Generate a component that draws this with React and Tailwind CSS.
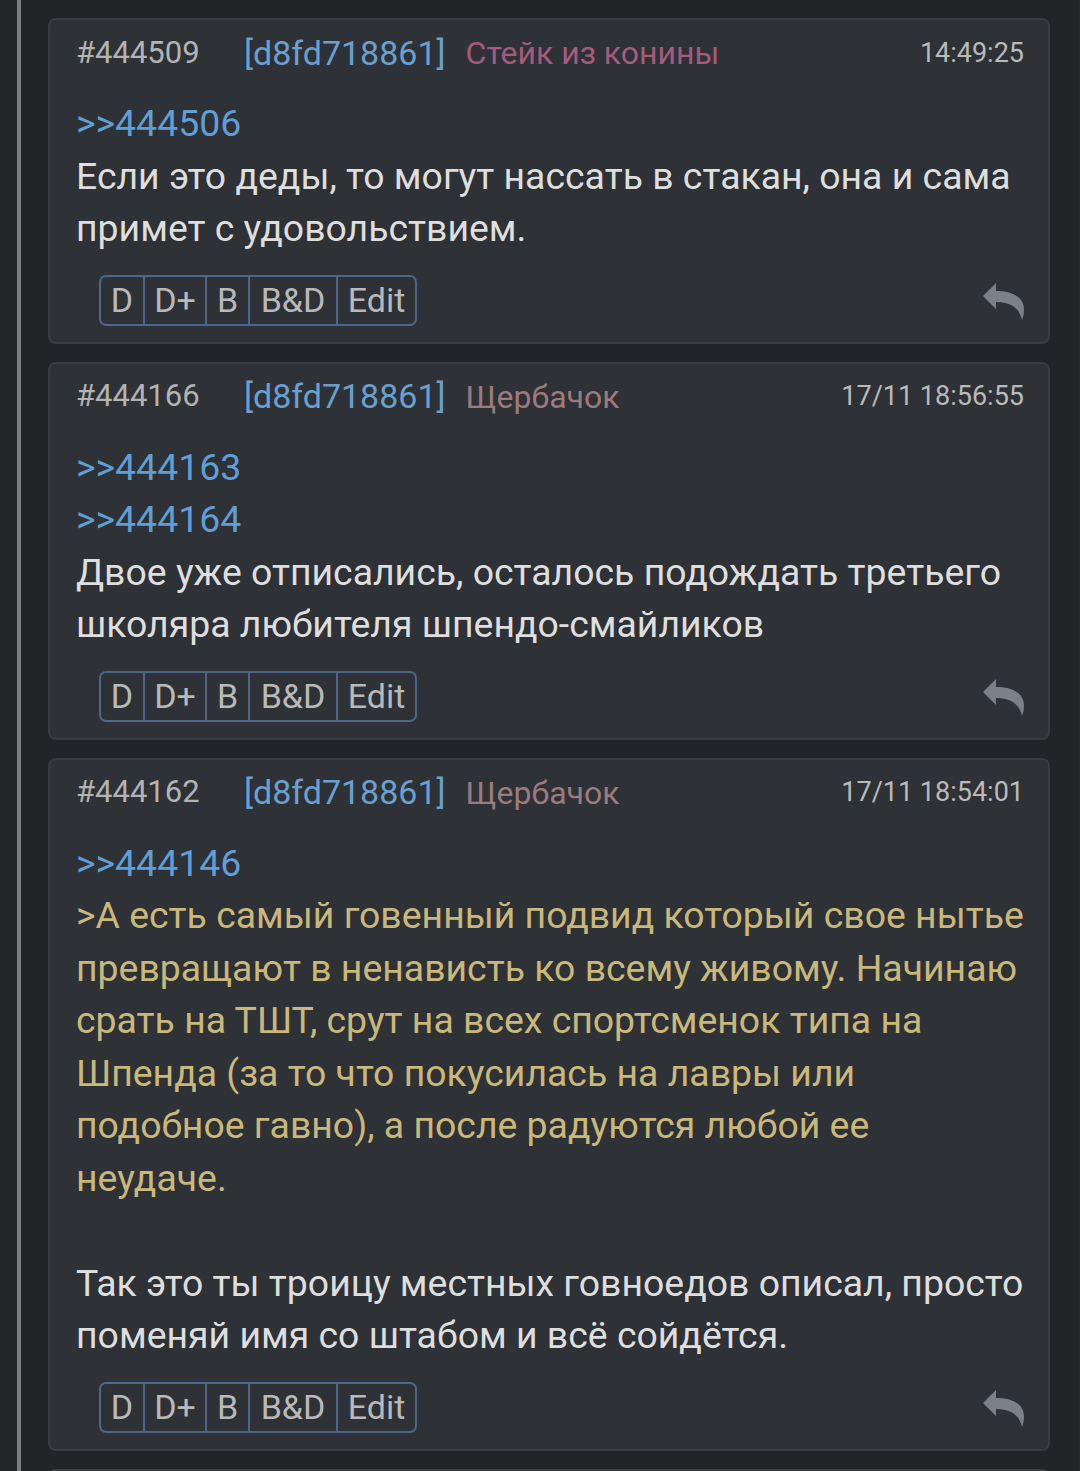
const posts = [
  {
    num: "#444509",
    id: "[d8fd718861]",
    name: "Стейк из конины",
    nameColor: "text-[#a35b7e]",
    time: "14:49:25",
    body: [
      { t: ">>444506", c: "link" },
      { t: "Если это деды, то могут нассать в стакан, она и сама" },
      { t: "примет с удовольствием." },
    ],
  },
  {
    num: "#444166",
    id: "[d8fd718861]",
    name: "Щербачок",
    nameColor: "text-[#9b7b7d]",
    time: "17/11 18:56:55",
    body: [
      { t: ">>444163", c: "link" },
      { t: ">>444164", c: "link" },
      { t: "Двое уже отписались, осталось подождать третьего" },
      { t: "школяра любителя шпендо-смайликов" },
    ],
  },
  {
    num: "#444162",
    id: "[d8fd718861]",
    name: "Щербачок",
    nameColor: "text-[#9b7b7d]",
    time: "17/11 18:54:01",
    body: [
      { t: ">>444146", c: "link" },
      { t: ">А есть самый говенный подвид который свое нытье", c: "quote" },
      { t: "превращают в ненависть ко всему живому. Начинаю", c: "quote" },
      { t: "срать на ТШТ, срут на всех спортсменок типа на", c: "quote" },
      { t: "Шпенда (за то что покусилась на лавры или", c: "quote" },
      { t: "подобное гавно), а после радуются любой ее", c: "quote" },
      { t: "неудаче.", c: "quote" },
      { t: "" },
      { t: "Так это ты троицу местных говноедов описал, просто" },
      { t: "поменяй имя со штабом и всё сойдётся." },
    ],
  },
];

const lineColor = {
  link: "text-[#5f9fd6]",
  quote: "text-[#c9b87b]",
};

// стрелка "ответить"
function ReplyIcon() {
  return (
    <svg width="44" height="40" viewBox="0 0 44 40" fill="#7b8187">
      <path d="M1 14 L14 1 L14 9 C29 9 42 14 42 28 C42 32 41 35 40 38 C38 29 32 20 14 20 L14 27 Z" />
    </svg>
  );
}

function Post({ post }) {
  return (
    <div className="bg-[#2e3135] border-2 border-[#393c40] rounded-[8px] pl-[26px] pr-[24px] pt-[13px] pb-[16px]">
      {/* шапка поста */}
      <div className="flex items-center h-[40px] whitespace-nowrap">
        <span className="w-[168px] text-[31px] text-[#b3b3b3]">{post.num}</span>
        <span className="text-[34px] text-[#6aa0d0]">{post.id}</span>
        <span className={`ml-[20px] text-[32px] ${post.nameColor}`}>{post.name}</span>
        <span className="ml-auto text-[27px] text-[#bababa]">{post.time}</span>
      </div>

      <div className="mt-[24px] text-[37.4px] leading-[52.5px] text-[#dedede] whitespace-nowrap">
        {post.body.map((l, i) => (
          <div key={i} className={`h-[52.5px] ${l.c ? lineColor[l.c] : ""}`}>
            {l.t}
          </div>
        ))}
      </div>

      <div className="mt-[20px] h-[51px] flex items-center justify-between">
        <div className="ml-[23px] flex h-[51px] border-2 border-[#4e6689] rounded-[7px] text-[34px] text-[#b9b9b9]">
          <div className="w-[44px] flex items-center justify-center border-r-2 border-[#4e6689]">D</div>
          <div className="w-[62px] flex items-center justify-center border-r-2 border-[#4e6689]">D+</div>
          <div className="w-[43px] flex items-center justify-center border-r-2 border-[#4e6689]">B</div>
          <div className="w-[88px] flex items-center justify-center border-r-2 border-[#4e6689]">B&amp;D</div>
          <div className="w-[77px] flex items-center justify-center">Edit</div>
        </div>
        <div className="mt-[4px] mr-[-2px]">
          <ReplyIcon />
        </div>
      </div>
    </div>
  );
}

export default function App() {
  return (
    <div
      className="h-[1471px] overflow-hidden bg-[#222528] flex"
      style={{ fontFamily: "Roboto, 'Noto Sans', sans-serif" }}
    >
      <div className="w-[17px] bg-[#232628]" />
      <div className="w-[4px] bg-[#7c7f81]" />
      <div className="flex-1 pl-[27px] pr-[28px] pt-[18px] flex flex-col gap-[18px]">
        {posts.map((p) => (
          <Post key={p.num} post={p} />
        ))}
        <div className="h-[60px] shrink-0 bg-[#2e3135] border-2 border-[#393c40] rounded-[8px]" />
      </div>
      <div className="w-[2px] bg-[#26292b]" />
    </div>
  );
}
